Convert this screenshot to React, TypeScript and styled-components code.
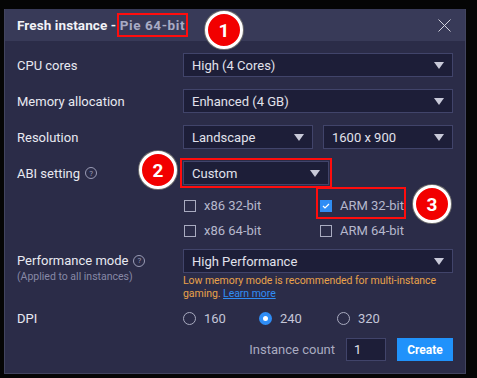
import { FC } from "react";
import styled, { createGlobalStyle } from "styled-components";

const GlobalStyle = createGlobalStyle`
  html, body {
    margin: 0;
    padding: 0;
    background: #050505;
    font-family: Roboto, "Open Sans", sans-serif;
    overflow: hidden;
  }
`;

const Page = styled.div`
  width: 477px;
  height: 378px;
  padding: 9px 0 0 4px;
  box-sizing: border-box;
  overflow: hidden;
`;

const Dialog = styled.div`
  position: relative;
  width: 462px;
  height: 365px;
  background: #2b2c48;
  border: 1px solid #42445f;
  border-top: none;
  box-sizing: border-box;
  display: flex;
  flex-direction: column;
`;

const Header = styled.div`
  flex: none;
  height: 32px;
  background: #383a58;
  display: flex;
  align-items: center;
  justify-content: space-between;
  padding: 0 14px 0 12px;
`;

const Title = styled.div`
  font-size: 13.5px;
  line-height: 16px;
  font-weight: 700;
  color: #f2f2f7;
  letter-spacing: 0.1px;
`;

const Version = styled.span`
  position: relative;
  color: #a9abc4;
  letter-spacing: 0.6px;
  &::after {
    content: "";
    position: absolute;
    left: -3px;
    right: -3px;
    top: -4px;
    bottom: -4px;
    border: 2px solid #ff0d0d;
  }
`;

const Close = styled.svg`
  width: 13px;
  height: 13px;
`;

const Body = styled.div`
  padding: 12px 12px 0 12px;
  display: flex;
  flex-direction: column;
`;

const Row = styled.div<{ $mt?: number; $align?: string }>`
  display: grid;
  grid-template-columns: 166px 270px;
  align-items: ${(p) => p.$align ?? "center"};
  min-height: 24px;
  margin-top: ${(p) => p.$mt ?? 0}px;
`;

const Label = styled.div`
  font-size: 13px;
  line-height: 15px;
  color: #e8e9f1;
  display: flex;
  align-items: center;
  gap: 5px;
`;

const LabelBlock = styled.div`
  padding-top: 4px;
`;

const SubLabel = styled.div`
  font-size: 10.5px;
  line-height: 12px;
  color: #8789a6;
  margin-top: 3px;
`;

const Help = styled.span`
  width: 10px;
  height: 10px;
  border: 1px solid #9a9cb6;
  border-radius: 50%;
  font-size: 8px;
  color: #9a9cb6;
  display: inline-flex;
  align-items: center;
  justify-content: center;
`;

const Controls = styled.div`
  display: flex;
  gap: 10px;
`;

const Stack = styled.div`
  display: flex;
  flex-direction: column;
`;

const Select = styled.div<{ $w?: number; $marked?: boolean }>`
  position: relative;
  width: ${(p) => (p.$w ? `${p.$w}px` : "100%")};
  height: 24px;
  box-sizing: border-box;
  background: #1d1e38;
  border: 1px solid #41446a;
  color: #e1e2ec;
  font-size: 13px;
  display: flex;
  align-items: center;
  justify-content: space-between;
  padding: 0 8px;
  outline: ${(p) => (p.$marked ? "2px solid #ff0d0d" : "none")};
  outline-offset: 1px;
`;

const Arrow = styled.span`
  width: 0;
  height: 0;
  border-left: 5px solid transparent;
  border-right: 5px solid transparent;
  border-top: 7px solid #c8c9d8;
`;

const Checks = styled.div`
  display: grid;
  grid-template-columns: 136px 136px;
  grid-auto-rows: 25px;
  margin: 8px 0 6px 166px;
`;

const CheckItem = styled.div<{ $marked?: boolean }>`
  position: relative;
  display: flex;
  align-items: center;
  gap: 8px;
  font-size: 13px;
  color: #b6b8cc;
  &::after {
    content: "";
    display: ${(p) => (p.$marked ? "block" : "none")};
    position: absolute;
    left: -3px;
    width: 86px;
    top: -6px;
    height: 28px;
    border: 2px solid #ff0d0d;
  }
`;

const Box = styled.span<{ $on?: boolean }>`
  width: 12px;
  height: 12px;
  box-sizing: border-box;
  border: 1px solid ${(p) => (p.$on ? "#2f8df5" : "#a9abc0")};
  background: ${(p) => (p.$on ? "#2f8df5" : "transparent")};
  display: inline-flex;
  align-items: center;
  justify-content: center;
  margin-left: 1px;
`;

const Warn = styled.div`
  font-size: 10.5px;
  line-height: 13px;
  color: #e9a24a;
  margin-top: 1px;
  width: 270px;
  letter-spacing: -0.05px;
`;

const LearnMore = styled.a`
  display: inline-block;
  line-height: 12px;
  color: #2f8df5;
  text-decoration: underline;
`;

const Radios = styled.div`
  display: flex;
  align-items: center;
`;

const RadioItem = styled.div<{ $w: number }>`
  width: ${(p) => p.$w}px;
  display: flex;
  align-items: center;
  gap: 8px;
  font-size: 13px;
  color: #c4c6d8;
`;

const Radio = styled.span<{ $on?: boolean }>`
  width: 13px;
  height: 13px;
  box-sizing: border-box;
  border-radius: 50%;
  border: ${(p) => (p.$on ? "4px solid #2f8df5" : "1.5px solid #a9abc0")};
  background: ${(p) => (p.$on ? "#ffffff" : "transparent")};
`;

const Footer = styled.div`
  display: flex;
  justify-content: flex-end;
  align-items: center;
  gap: 11px;
  margin-top: 8px;
`;

const CountLabel = styled.span`
  font-size: 13px;
  color: #a9abc0;
`;

const CountInput = styled.div`
  width: 40px;
  height: 23px;
  box-sizing: border-box;
  background: #1d1e38;
  border: 1px solid #41446a;
  font-size: 13px;
  color: #e1e2ec;
  padding-left: 7px;
  display: flex;
  align-items: center;
`;

const CreateButton = styled.button`
  width: 56px;
  height: 23px;
  border: none;
  background: #2092fb;
  color: #ffffff;
  font-family: Roboto, sans-serif;
  font-weight: 700;
  font-size: 12px;
  padding: 0;
`;

const Badge = styled.div<{ $x: number; $y: number }>`
  position: absolute;
  left: ${(p) => p.$x - 19}px;
  top: ${(p) => p.$y - 19}px;
  width: 38px;
  height: 38px;
  box-sizing: border-box;
  border-radius: 50%;
  background: #f20000;
  border: 3px solid #ffffff;
  box-shadow: 0 0 0 1px #6d6d6d;
  color: #ffffff;
  font-family: Roboto, sans-serif;
  font-weight: 700;
  font-size: 19px;
  display: flex;
  align-items: center;
  justify-content: center;
`;

const Check: FC = () => (
  <svg width="8" height="6" viewBox="0 0 8 6">
    <path d="M1 3 L3 5 L7 1" fill="none" stroke="#fff" strokeWidth="1.2" />
  </svg>
);

const App: FC = () => (
  <>
    <GlobalStyle />
    <Page>
      <Dialog>
        <Header>
          <Title>
            Fresh instance - <Version>Pie 64-bit</Version>
          </Title>
          <Close viewBox="0 0 13 13">
            <path d="M0.5 0.5 L12.5 12.5 M12.5 0.5 L0.5 12.5" stroke="#d0d1dc" strokeWidth="1" />
          </Close>
        </Header>
        <Body>
          <Row>
            <Label>CPU cores</Label>
            <Select>
              High (4 Cores) <Arrow />
            </Select>
          </Row>
          <Row $mt={12}>
            <Label>Memory allocation</Label>
            <Select>
              Enhanced (4 GB) <Arrow />
            </Select>
          </Row>
          <Row $mt={12}>
            <Label>Resolution</Label>
            <Controls>
              <Select $w={130}>
                Landscape <Arrow />
              </Select>
              <Select $w={130}>
                1600 x 900 <Arrow />
              </Select>
            </Controls>
          </Row>
          <Row $mt={12}>
            <Label>
              ABI setting <Help>?</Help>
            </Label>
            <Select $w={146} $marked>
              Custom <Arrow />
            </Select>
          </Row>
          <Checks>
            <CheckItem>
              <Box /> x86 32-bit
            </CheckItem>
            <CheckItem $marked>
              <Box $on>
                <Check />
              </Box>
              ARM 32-bit
            </CheckItem>
            <CheckItem>
              <Box /> x86 64-bit
            </CheckItem>
            <CheckItem>
              <Box /> ARM 64-bit
            </CheckItem>
          </Checks>
          <Row $align="start">
            <LabelBlock>
              <Label>
                Performance mode <Help>?</Help>
              </Label>
              <SubLabel>(Applied to all instances)</SubLabel>
            </LabelBlock>
            <Stack>
              <Select>
                High Performance <Arrow />
              </Select>
              <Warn>
                Low memory mode is recommended for multi-instance gaming.{" "}
                <LearnMore>Learn more</LearnMore>
              </Warn>
            </Stack>
          </Row>
          <Row $mt={6}>
            <Label>DPI</Label>
            <Radios>
              <RadioItem $w={76}>
                <Radio /> 160
              </RadioItem>
              <RadioItem $w={78}>
                <Radio $on /> 240
              </RadioItem>
              <RadioItem $w={60}>
                <Radio /> 320
              </RadioItem>
            </Radios>
          </Row>
          <Footer>
            <CountLabel>Instance count</CountLabel>
            <CountInput>1</CountInput>
            <CreateButton>Create</CreateButton>
          </Footer>
        </Body>
        <Badge $x={219} $y={21}>1</Badge>
        <Badge $x={153} $y={161}>2</Badge>
        <Badge $x={427} $y={195}>3</Badge>
      </Dialog>
    </Page>
  </>
);

export default App;
